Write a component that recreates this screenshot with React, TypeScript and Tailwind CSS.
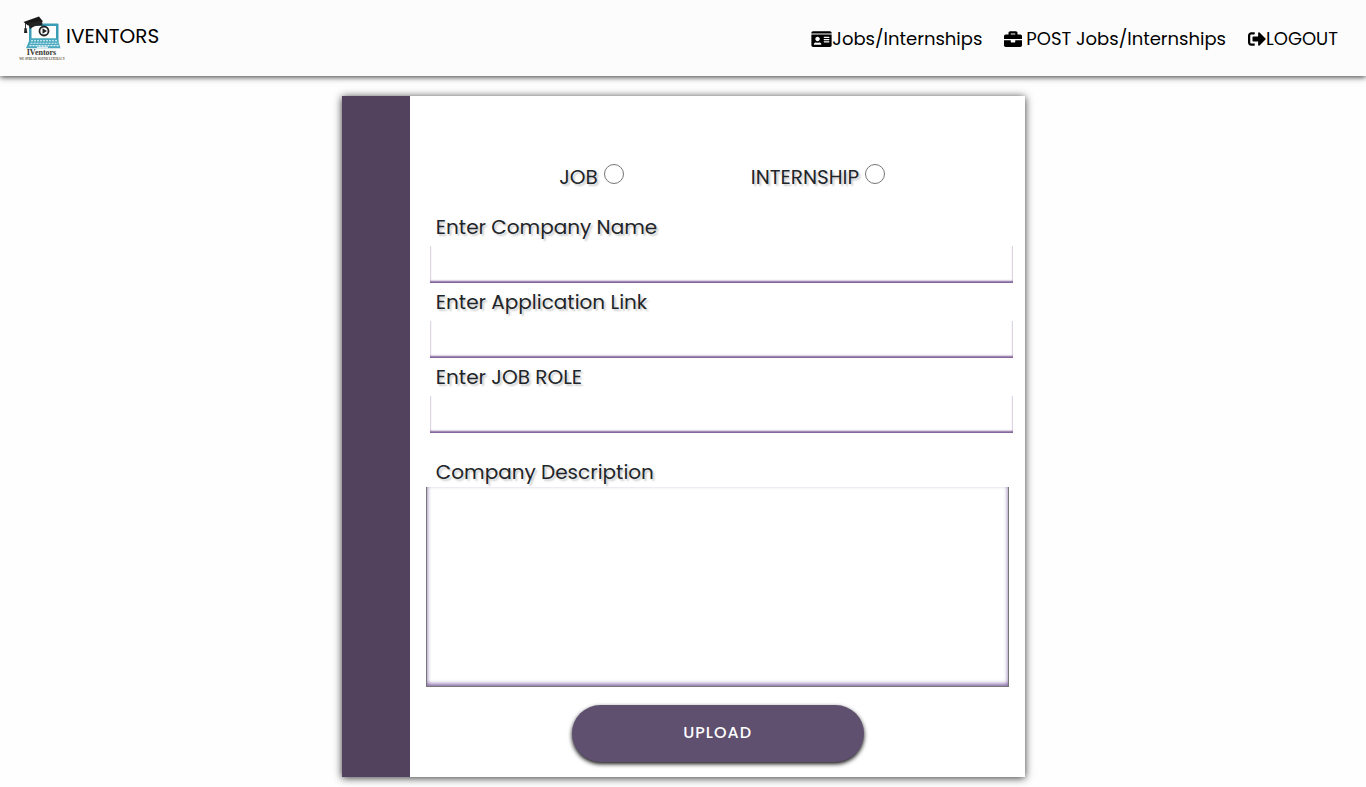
import { FaBriefcase, FaIdCard, FaSignOutAlt } from "react-icons/fa";

function Logo() {
  return (
    <svg viewBox="0 0 46 46" className="size-[46px]" role="img" aria-label="IVentors logo">
      <path d="M11 8.500h27.500q1 0 1 1V27H10V9.500q0-1 1-1z" fill="#3a9db5" />
      <path d="M12.500 11h24.500v12.500h-24.500z" fill="#fdfdfd" />
      <path d="M11 23.500h27.500l3 9.700H7z" fill="#4aa9bf" />
      <path d="M12 25.800h26M11.500 28.200h27.500M10.500 30.600h29.500" stroke="#e6f6fa" strokeWidth="1.100" strokeDasharray="2 1" />
      <path d="M18 32.200h11" stroke="#ffffff" strokeWidth="1.200" />
      <circle cx="25" cy="16" r="4.500" fill="#fff" stroke="#222" strokeWidth="1.800" />
      <path d="M23.500 13.300l4.500 2.700-4.500 2.700z" fill="#222" />
      <path d="M4.500 7L20 1.500l4 5L9 10.500z" fill="#181818" />
      <path d="M9 8l14-2.500.500 5c-5-.500-9 .500-12.500 3.500z" fill="#222" />
      <path d="M6.500 7.500v7" stroke="#222" strokeWidth=".9" />
      <path d="M5.500 13h2l.8 5H5z" fill="#222" />
      <text x="22.500" y="39.500" textAnchor="middle" fontSize="8" fontWeight="700" fontFamily="Liberation Serif, serif" fill="#3a3832">IVentors</text>
      <text x="23" y="45" textAnchor="middle" fontSize="3" fontWeight="700" fontFamily="Liberation Serif, serif" fill="#5d5647">WE SPREAD SOUND LITERACY</text>
    </svg>
  );
}

function RadioOption({ id, label }: { id: string; label: string }) {
  return (
    <div className="flex items-start gap-1.5">
      <label htmlFor={id} className="pt-0.5 leading-[30px] [text-shadow:2px_2px_2px_#ccc]">{label}</label>
      <input
        id={id}
        type="radio"
        name="kind"
        className="mt-1 size-5 appearance-none rounded-full border border-[#767676] bg-white checked:border-[6px] checked:border-[#5f5070]"
      />
    </div>
  );
}

function Field({ id, label }: { id: string; label: string }) {
  return (
    <div className="flex h-[75px] flex-col">
      <label htmlFor={id} className="h-[34px] pl-1.5 leading-[30px] [text-shadow:2px_2px_2px_#ccc]">{label}</label>
      <input
        id={id}
        type="text"
        className="h-[37px] w-full px-2 outline-none [box-shadow:inset_0_-2px_2px_#7d5f98]"
      />
    </div>
  );
}

export default function App() {
  return (
    <div className="min-h-screen bg-[#fefefe] font-[Poppins,Inter,sans-serif] text-black">
      <header className="flex h-[76px] items-center justify-between bg-[#fcfcfc] pr-7 pl-[19px] [box-shadow:0_1px_6px_#333]">
        <a href="#" className="flex items-center gap-px">
          <Logo />
          <span className="pb-1 text-xl">IVENTORS</span>
        </a>
        <nav className="flex items-center gap-[22px] pt-0.5 text-lg">
          <a href="#jobs" className="flex items-center"><FaIdCard className="h-[18px] w-[21px]" />Jobs/Internships</a>
          <a href="#post" className="flex items-center gap-1"><FaBriefcase />POST Jobs/Internships</a>
          <a href="#logout" className="flex items-center"><FaSignOutAlt />LOGOUT</a>
        </nav>
      </header>
      <main className="pt-5 pb-2.5">
        <form className="mx-auto flex w-1/2 bg-white text-xl text-[#212529] [box-shadow:0_1px_8px_#333]">
          <div className="w-1/10 bg-[#52425e]" />
          <div className="w-9/10 pt-16 pr-[11px] pb-[15px] pl-5">
            <div className="flex h-[52px] justify-center gap-[127px] pl-px">
              <RadioOption id="job" label="JOB" />
              <RadioOption id="internship" label="INTERNSHIP" />
            </div>
            <Field id="company" label="Enter Company Name" />
            <Field id="link" label="Enter Application Link" />
            <Field id="role" label="Enter JOB ROLE" />
            <div className="-ml-1 mr-1 flex flex-col pt-5">
              <label htmlFor="description" className="h-[30px] pl-2.5 leading-[30px] [text-shadow:2px_2px_2px_#ccc]">Company Description</label>
              <textarea
                id="description"
                className="h-[200px] w-full resize-none border border-t-0 border-[#767676] p-2 outline-none [box-shadow:inset_0_-2px_4px_#7d5fa0]"
              />
              <button
                type="button"
                className="mt-[18px] h-[57px] w-1/2 self-center rounded-full bg-[#5f5070] pb-0.5 text-base font-medium tracking-[1px] text-white [box-shadow:0_2px_4px_#111]"
              >
                UPLOAD
              </button>
            </div>
          </div>
        </form>
      </main>
    </div>
  );
}
